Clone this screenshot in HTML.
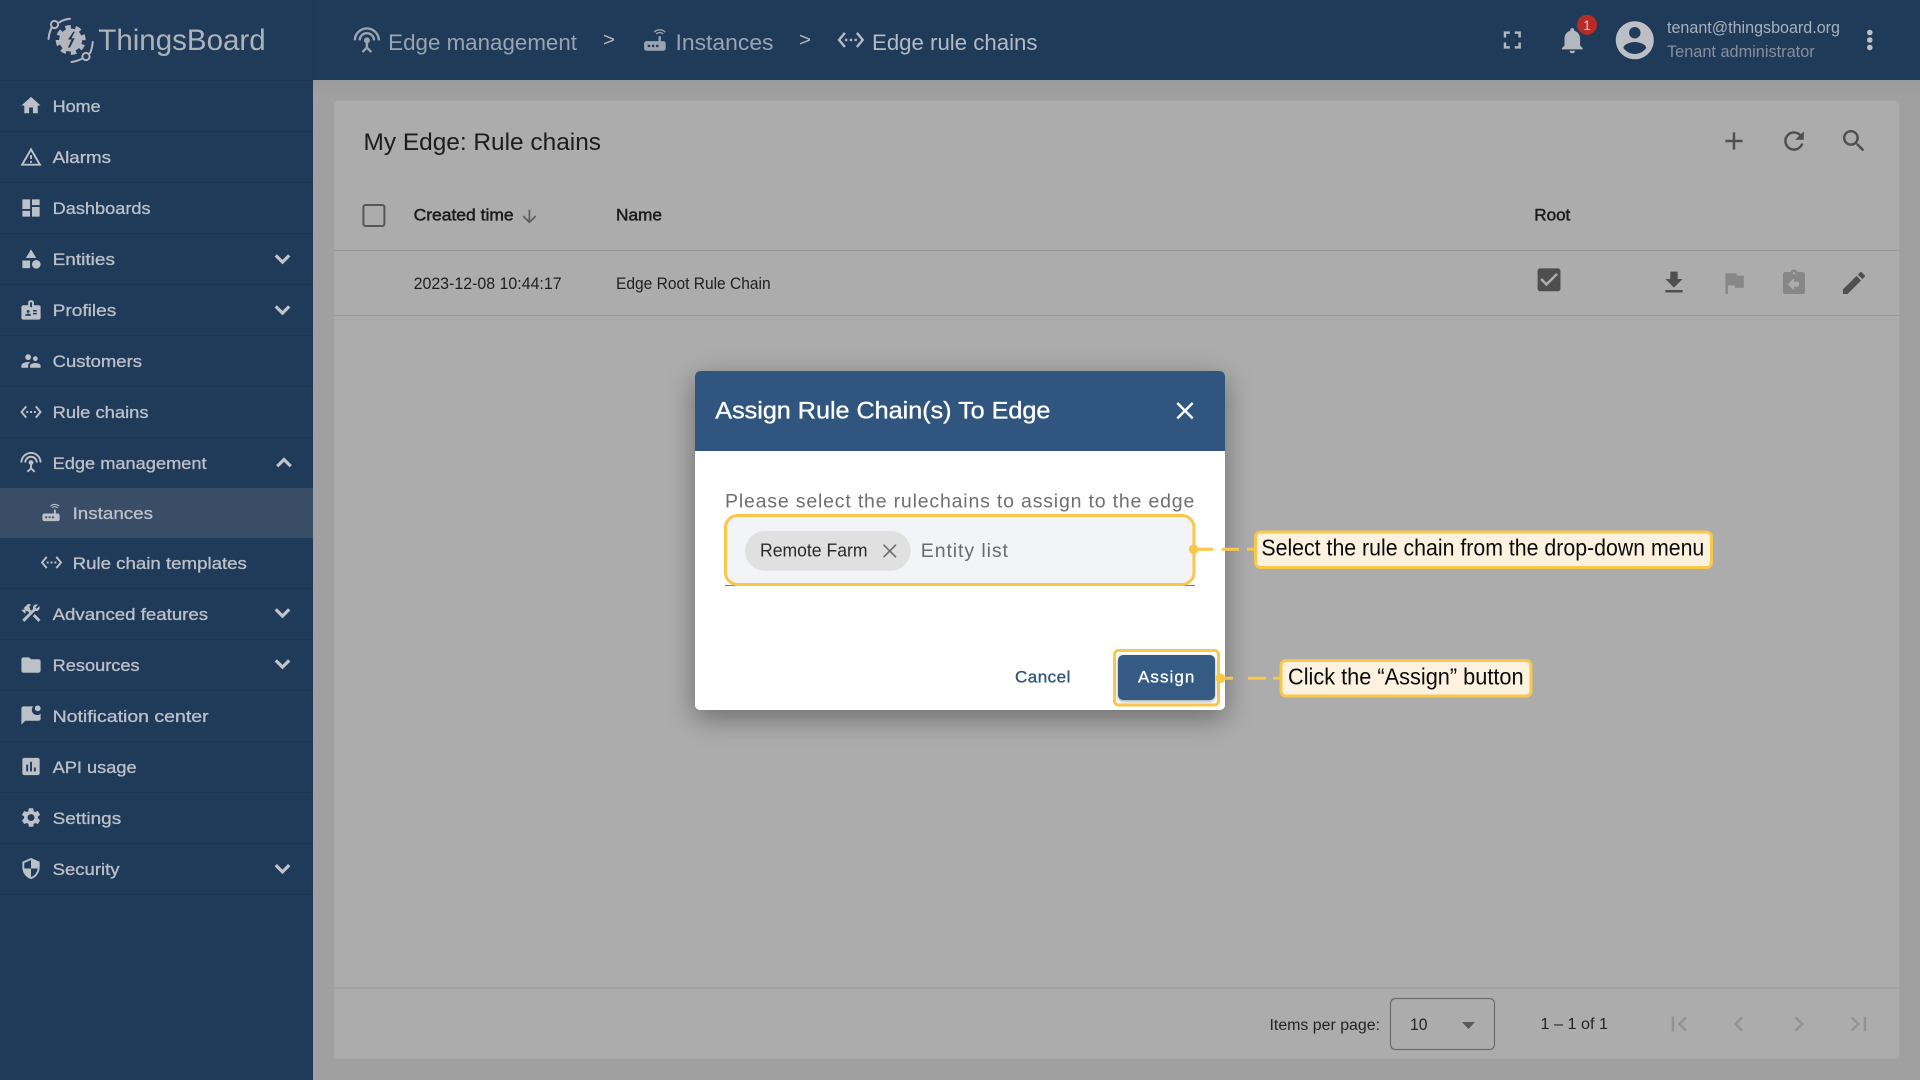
<!DOCTYPE html>
<html lang="en"><head><meta charset="utf-8"><title>ThingsBoard - Edge rule chains</title>
<style>
html,body{margin:0;padding:0;width:1920px;height:1080px;overflow:hidden;background:#a0a0a0}
svg{display:block}
text{font-family:"Liberation Sans",Arial,sans-serif;white-space:pre}
</style></head><body>
<svg xmlns="http://www.w3.org/2000/svg" width="1920" height="1080" viewBox="0 0 1920 1080">
<defs>
<filter id="ds" x="-30%" y="-30%" width="160%" height="160%"><feDropShadow dx="0" dy="8" stdDeviation="14" flood-color="#000" flood-opacity=".38"/></filter>
<filter id="bs" x="-20%" y="-20%" width="140%" height="150%"><feDropShadow dx="0" dy="1.5" stdDeviation="1.5" flood-color="#000" flood-opacity=".35"/></filter>
<linearGradient id="topg" x1="0" x2="0" y1="0" y2="1"><stop offset="0" stop-color="#9c9c9c"/><stop offset="1" stop-color="#a1a1a1"/></linearGradient>
</defs>

<!-- page -->
<rect width="1920" height="1080" fill="#a0a0a0"/>
<rect x="313" y="80" width="1607" height="21" fill="url(#topg)"/>

<!-- card -->
<rect x="334" y="100.5" width="1565.5" height="958.5" rx="4" fill="#acacac" stroke="#a3a3a3"/>
<rect x="334" y="250" width="1565.5" height="1" fill="#989898"/>
<rect x="334" y="315" width="1565.5" height="1" fill="#989898"/>
<rect x="334" y="987.5" width="1565.5" height="1" fill="#989898"/>

<text x="363.500" y="150" font-size="24.5" fill="#1c1c1c" textLength="237.500" lengthAdjust="spacingAndGlyphs">My Edge: Rule chains</text>

<!-- table head -->
<rect x="363.4" y="205" width="21" height="21" rx="2" fill="none" stroke="#565656" stroke-width="2"/>
<g fill="#1c1c1c" stroke="#1c1c1c" stroke-width=".5" font-size="17">
<text x="413.600" y="220.5" textLength="100" lengthAdjust="spacingAndGlyphs">Created time</text>
<text x="616" y="220.5" textLength="46" lengthAdjust="spacingAndGlyphs">Name</text>
<text x="1534.3" y="220.5" textLength="36" lengthAdjust="spacingAndGlyphs">Root</text>
</g>
<path transform="translate(519.2 206.5) scale(.85)" fill="#5c5c5c" d="M20 12l-1.41-1.41L13 16.17V4h-2v12.17l-5.58-5.59L4 12l8 8 8-8z"/>
<g fill="#1f1f1f" font-size="17">
<text x="413.600" y="289" textLength="148" lengthAdjust="spacingAndGlyphs">2023-12-08 10:44:17</text>
<text x="616" y="289" textLength="154.6" lengthAdjust="spacingAndGlyphs">Edge Root Rule Chain</text>
</g>
<path transform="translate(1533.8 264.6) scale(1.27)" fill="#4e4e4e" d="M19 3H5c-1.11 0-2 .9-2 2v14c0 1.1.89 2 2 2h14c1.11 0 2-.9 2-2V5c0-1.1-.89-2-2-2zm-9 14l-5-5 1.41-1.41L10 14.17l7.59-7.59L19 8l-9 9z"/>

<!-- card header icons -->
<g fill="#4f4f4f">
<path transform="translate(1719.3 126.3) scale(1.2245)" d="M19 13h-6v6h-2v-6H5v-2h6V5h2v6h6v2z"/>
<path transform="translate(1779.3 126.3) scale(1.2245)" d="M17.65 6.35C16.2 4.9 14.21 4 12 4c-4.42 0-7.99 3.58-7.99 8s3.57 8 7.99 8c3.73 0 6.84-2.55 7.73-6h-2.08c-.82 2.33-3.04 4-5.65 4-3.31 0-6-2.69-6-6s2.69-6 6-6c1.66 0 3.14.69 4.22 1.78L13 11h7V4l-2.35 2.35z"/>
<path transform="translate(1839.3 126.3) scale(1.2245)" d="M15.5 14h-.79l-.28-.27C15.41 12.59 16 11.11 16 9.5 16 5.91 13.09 3 9.5 3S3 5.91 3 9.5 5.91 16 9.5 16c1.61 0 3.09-.59 4.23-1.57l.27.28v.79l5 4.99L20.49 19l-4.99-5zm-6 0C7.01 14 5 11.99 5 9.5S7.01 5 9.5 5 14 7.01 14 9.5 11.99 14 9.5 14z"/>
<path transform="translate(1659.3 268) scale(1.2245)" d="M19 9h-4V3H9v6H5l7 7 7-7zM5 18v2h14v-2H5z"/>
<path transform="translate(1839.3 268.3) scale(1.2245)" d="M3 17.25V21h3.75L17.81 9.94l-3.75-3.75L3 17.25zM20.71 7.04c.39-.39.39-1.02 0-1.41l-2.34-2.34c-.39-.39-1.02-.39-1.41 0l-1.83 1.83 3.75 3.75 1.83-1.83z"/>
</g>
<g fill="#878787">
<path transform="translate(1719.3 268.3) scale(1.2245)" d="M14.4 6L14 4H5v17h2v-7h5.6l.4 2h7V6z"/>
<path transform="translate(1779.3 268.3) scale(1.2245)" d="M19 3h-4.18C14.4 1.84 13.3 1 12 1c-1.3 0-2.4.84-2.82 2H5c-1.1 0-2 .9-2 2v14c0 1.1.9 2 2 2h14c1.1 0 2-.9 2-2V5c0-1.1-.9-2-2-2zm-7 0c.55 0 1 .45 1 1s-.45 1-1 1-1-.45-1-1 .45-1 1-1zm4 12h-4v3l-5-5 5-5v3h4v4z"/>
</g>

<!-- footer -->
<g fill="#242424">
<text x="1269.5" y="1030" font-size="15.5" textLength="110.5" lengthAdjust="spacingAndGlyphs">Items per page:</text>
<text x="1410" y="1030" font-size="16.5" textLength="17.5" lengthAdjust="spacingAndGlyphs">10</text>
<text x="1540.5" y="1029" font-size="16" textLength="67.5" lengthAdjust="spacingAndGlyphs">1 – 1 of 1</text>
</g>
<rect x="1390.5" y="998.5" width="104" height="51" rx="5" fill="none" stroke="#6c6c6c" stroke-width="1.2"/>
<path d="M1462 1022h13l-6.500 7z" fill="#5a5a5a"/>
<g fill="#929292">
<path transform="translate(1664.3 1009.300) scale(1.2245)" d="M18.41 16.59L13.82 12l4.59-4.59L17 6l-6 6 6 6zM6 6h2v12H6z"/>
<path transform="translate(1724 1009.300) scale(1.2245)" d="M15.41 7.41L14 6l-6 6 6 6 1.41-1.41L10.830 12z"/>
<path transform="translate(1784.300 1009.300) scale(1.2245)" d="M10 6L8.590 7.410 13.170 12l-4.580 4.590L10 18l6-6z"/>
<path transform="translate(1844.100 1009.300) scale(1.2245)" d="M5.590 7.410L10.180 12l-4.590 4.590L7 18l6-6-6-6zM16 6h2v12h-2z"/>
</g>

<!-- top bar -->
<rect width="1920" height="80" fill="#203a59"/>
<!-- sidebar -->
<rect width="313" height="1080" fill="#203a59"/>
<rect x="312.500" y="0" width="1" height="80" fill="#1e3755"/>
<rect y="488" width="313" height="50" fill="#3a4d66"/>
<g fill="#1d3654">
<rect y="80" width="313" height="1"/><rect y="131" width="313" height="1"/><rect y="182" width="313" height="1"/><rect y="233" width="313" height="1"/><rect y="284" width="313" height="1"/><rect y="335" width="313" height="1"/><rect y="386" width="313" height="1"/><rect y="437" width="313" height="1"/><rect y="588" width="313" height="1"/><rect y="639" width="313" height="1"/><rect y="690" width="313" height="1"/><rect y="741" width="313" height="1"/><rect y="792" width="313" height="1"/><rect y="843" width="313" height="1"/><rect y="894" width="313" height="1"/>
</g>

<!-- logo -->
<g fill="none" stroke="#b3b7bd" stroke-width="2" stroke-linecap="round">
<path d="M48.500 39C49 34 50 31 51.500 28"/>
<path d="M59 22.500C62 20.500 66 19.200 70 18.800"/>
<circle cx="54.500" cy="24.500" r="3.600"/>
<path d="M71.500 62C75 61.500 78.500 60.500 81.500 59"/>
<path d="M90 53C91.700 49.500 92.500 45.500 92.700 42"/>
<circle cx="86" cy="56.500" r="3.600"/>
<circle cx="70.700" cy="40" r="12" stroke-width="6" stroke-dasharray="5 4.420" stroke-linecap="butt" transform="rotate(20 70.700 40)"/>
</g>
<circle cx="70.700" cy="40" r="11.500" fill="#b3b7bd"/>
<path d="M73.500 31.500l-5.500 8h3.500l-3.500 8 2 .3 4.700-9.500H71.500l3.300-6.500z" fill="#203a59"/>
<text x="98.300" y="50" font-size="30" fill="#adb3bb" textLength="167.400" lengthAdjust="spacingAndGlyphs">ThingsBoard</text>

<!-- sidebar text -->
<g fill="#bcc1c8" stroke="#bcc1c8" stroke-width=".3" font-size="17">
<text x="52.600" y="112" textLength="48" lengthAdjust="spacingAndGlyphs">Home</text>
<text x="52.600" y="163" textLength="58.400" lengthAdjust="spacingAndGlyphs">Alarms</text>
<text x="52.600" y="214" textLength="98" lengthAdjust="spacingAndGlyphs">Dashboards</text>
<text x="52.600" y="265" textLength="62.400" lengthAdjust="spacingAndGlyphs">Entities</text>
<text x="52.600" y="316" textLength="63.700" lengthAdjust="spacingAndGlyphs">Profiles</text>
<text x="52.600" y="367" textLength="89.400" lengthAdjust="spacingAndGlyphs">Customers</text>
<text x="52.600" y="418" textLength="96" lengthAdjust="spacingAndGlyphs">Rule chains</text>
<text x="52.600" y="469" textLength="154" lengthAdjust="spacingAndGlyphs">Edge management</text>
<text x="72.600" y="519" textLength="80.400" lengthAdjust="spacingAndGlyphs">Instances</text>
<text x="72.600" y="569" textLength="174.300" lengthAdjust="spacingAndGlyphs">Rule chain templates</text>
<text x="52.600" y="620" textLength="155.500" lengthAdjust="spacingAndGlyphs">Advanced features</text>
<text x="52.600" y="671" textLength="87" lengthAdjust="spacingAndGlyphs">Resources</text>
<text x="52.600" y="722" textLength="156" lengthAdjust="spacingAndGlyphs">Notification center</text>
<text x="52.600" y="773" textLength="84" lengthAdjust="spacingAndGlyphs">API usage</text>
<text x="52.600" y="824" textLength="68.600" lengthAdjust="spacingAndGlyphs">Settings</text>
<text x="52.600" y="875" textLength="67" lengthAdjust="spacingAndGlyphs">Security</text>
</g>

<!-- sidebar icons -->
<g fill="#bcc1c8">
<path transform="translate(19.500 94) scale(.96)" d="M10 20v-6h4v6h5v-8h3L12 3 2 12h3v8z"/>
<path transform="translate(19.500 145.500) scale(.96)" d="M12 5.990L19.530 19H4.470L12 5.990M12 2L1 21h22L12 2zm1 14h-2v2h2v-2zm0-6h-2v4h2v-4z"/>
<path transform="translate(19.500 196.500) scale(.96)" d="M3 13h8V3H3v10zm0 8h8v-6H3v6zm10 0h8V11h-8v10zm0-18v6h8V3h-8z"/>
<path transform="translate(19.500 247.500) scale(.96)" d="M12 2l-5.500 9h11zM3 13.500h8v8H3zM17.500 13a4.500 4.500 0 1 0 0 9 4.500 4.500 0 0 0 0-9z"/>
<path transform="translate(19.500 298.500) scale(.96)" d="M20 7h-5V4c0-1.100-.9-2-2-2h-2c-1.100 0-2 .9-2 2v3H4c-1.100 0-2 .9-2 2v11c0 1.100.9 2 2 2h16c1.100 0 2-.9 2-2V9c0-1.100-.9-2-2-2zM9 12c.83 0 1.500.67 1.500 1.500S9.830 15 9 15s-1.500-.67-1.500-1.500S8.170 12 9 12zm3 6H6v-.75c0-1 2-1.500 3-1.500s3 .5 3 1.500V18zm1-9h-2V4h2v5zm5 7.500h-4V15h4v1.500zm0-3h-4V12h4v1.500z"/>
<path transform="translate(19.500 349.500) scale(.96)" d="M16.500 12c1.380 0 2.490-1.120 2.490-2.500S17.880 7 16.500 7C15.120 7 14 8.120 14 9.500s1.120 2.500 2.500 2.500zM9 11c1.660 0 2.990-1.340 2.990-3S10.660 5 9 5C7.340 5 6 6.340 6 8s1.340 3 3 3zm7.500 3c-1.830 0-5.500.92-5.500 2.750V19h11v-2.250c0-1.830-3.670-2.750-5.500-2.750zM9 13c-2.330 0-7 1.170-7 3.500V19h7v-2.250c0-.85.33-2.340 2.370-3.470C10.500 13.100 9.660 13 9 13z"/>
<path transform="translate(19.500 400.500) scale(.96)" d="M7.770 6.760L6.230 5.480.82 12l5.410 6.520 1.540-1.280L3.420 12l4.350-5.240zM7 13h2v-2H7v2zm10-2h-2v2h2v-2zm-6 2h2v-2h-2v2zm6.770-7.520l-1.540 1.280L20.580 12l-4.350 5.240 1.540 1.280L23.180 12l-5.410-6.520z"/>
<path transform="translate(19.500 451) scale(.96)" d="M12 5c-3.870 0-7 3.130-7 7h2c0-2.760 2.240-5 5-5s5 2.240 5 5h2c0-3.870-3.130-7-7-7zm1 9.290c.88-.39 1.500-1.260 1.500-2.290 0-1.380-1.120-2.500-2.500-2.500S9.500 10.620 9.500 12c0 1.020.62 1.900 1.500 2.290v3.300L7.590 21 9 22.410l3-3 3 3L16.410 21 13 17.590v-3.300zM12 1C5.930 1 1 5.930 1 12h2c0-4.970 4.030-9 9-9s9 4.030 9 9h2c0-6.070-4.930-11-11-11z"/>
<path transform="translate(39.500 501) scale(.96)" d="M20.200 5.900l.8-.8C19.600 3.700 17.800 3 16 3s-3.600.7-5 2.100l.8.8C13 4.800 14.500 4.200 16 4.200s3 .6 4.200 1.700zm-.9.8c-.9-.9-2.100-1.400-3.300-1.400s-2.400.5-3.300 1.400l.8.8c.7-.7 1.600-1 2.500-1 .9 0 1.800.3 2.500 1l.8-.8zM19 13h-2V9h-2v4H5c-1.100 0-2 .9-2 2v4c0 1.100.9 2 2 2h14c1.100 0 2-.9 2-2v-4c0-1.100-.9-2-2-2zM8 18H6v-2h2v2zm3.500 0h-2v-2h2v2zm3.500 0h-2v-2h2v2z"/>
<path transform="translate(40 551) scale(.96)" d="M7.770 6.760L6.230 5.480.82 12l5.410 6.520 1.540-1.280L3.420 12l4.350-5.240zM7 13h2v-2H7v2zm10-2h-2v2h2v-2zm-6 2h2v-2h-2v2zm6.770-7.520l-1.540 1.280L20.580 12l-4.350 5.240 1.540 1.280L23.180 12l-5.410-6.520z"/>
<path transform="translate(19.500 601.500) scale(.96)" d="M13.783 15.172l2.121-2.121 5.996 5.996-2.121 2.121zM17.500 10c1.930 0 3.500-1.570 3.500-3.500 0-.58-.16-1.120-.41-1.600l-2.700 2.700-1.490-1.490 2.700-2.700c-.48-.25-1.020-.41-1.600-.41C15.570 3 14 4.570 14 6.500c0 .41.08.8.21 1.160l-1.850 1.850-1.780-1.780.71-.71-1.410-1.410L12 3.490c-1.170-1.170-3.070-1.170-4.240 0L4.220 7.030l1.410 1.410H2.810l-.71.71 3.540 3.540.71-.71V9.150l1.410 1.410.71-.71 1.780 1.780-7.410 7.410 2.120 2.120L16.340 9.790c.36.13.75.21 1.160.21z"/>
<path transform="translate(19.500 653.500) scale(.96)" d="M10 4H4c-1.100 0-1.990.9-1.990 2L2 18c0 1.100.9 2 2 2h16c1.100 0 2-.9 2-2V8c0-1.100-.9-2-2-2h-8l-2-2z"/>
<path transform="translate(19.500 703.500) scale(.96)" d="M14.300 3H4c-1.100 0-2 .9-2 2v17l4-4h14c1.100 0 2-.9 2-2V10.500A5 5 0 0 1 14.300 3zM19 2a3 3 0 1 0 0 6 3 3 0 0 0 0-6z"/>
<path transform="translate(19.500 755) scale(.96)" d="M19 3H5c-1.100 0-2 .9-2 2v14c0 1.100.9 2 2 2h14c1.100 0 2-.9 2-2V5c0-1.100-.9-2-2-2zM9 17H7v-7h2v7zm4 0h-2V7h2v10zm4 0h-2v-4h2v4z"/>
<path transform="translate(19.500 806) scale(.96)" d="M19.140 12.940c.04-.3.06-.61.06-.94 0-.32-.02-.64-.07-.94l2.030-1.580c.18-.14.23-.41.12-.61l-1.920-3.320c-.12-.22-.37-.29-.59-.22l-2.390.96c-.5-.38-1.030-.7-1.620-.94l-.36-2.540c-.04-.24-.24-.41-.48-.41h-3.840c-.24 0-.43.17-.47.41l-.36 2.540c-.59.24-1.130.57-1.620.94l-2.390-.96c-.22-.08-.47 0-.59.22L2.740 8.870c-.12.21-.08.47.12.61l2.030 1.580c-.05.3-.09.63-.09.94s.02.64.07.94l-2.030 1.580c-.18.14-.23.41-.12.61l1.920 3.320c.12.22.37.29.59.22l2.390-.96c.5.38 1.030.7 1.620.94l.36 2.540c.05.24.24.41.48.41h3.840c.24 0 .44-.17.47-.41l.36-2.540c.59-.24 1.130-.56 1.620-.94l2.390.96c.22.08.47 0 .59-.22l1.920-3.320c.12-.22.07-.47-.12-.61l-2.010-1.580zM12 15.600c-1.980 0-3.600-1.620-3.600-3.600s1.620-3.600 3.600-3.600 3.600 1.620 3.600 3.600-1.620 3.600-3.600 3.600z"/>
<path transform="translate(19.500 857) scale(.96)" d="M12 1L3 5v6c0 5.550 3.840 10.740 9 12 5.160-1.260 9-6.450 9-12V5l-9-4zm0 10.990h7c-.53 4.120-3.280 7.790-7 8.940V12H5V6.300l7-3.110v8.800z"/>
</g>
<!-- chevrons -->
<g fill="#c0c5cb" stroke="#c0c5cb" stroke-width=".6">
<path transform="translate(267.800 244.300) scale(1.2245)" d="M16.590 8.590L12 13.170 7.410 8.590 6 10l6 6 6-6z"/>
<path transform="translate(267.800 295.300) scale(1.2245)" d="M16.590 8.590L12 13.170 7.410 8.590 6 10l6 6 6-6z"/>
<path transform="translate(269.300 448) scale(1.2245)" d="M12 8l-6 6 1.410 1.410L12 10.830l4.590 4.580L18 14z"/>
<path transform="translate(267.800 598.300) scale(1.2245)" d="M16.590 8.590L12 13.170 7.410 8.590 6 10l6 6 6-6z"/>
<path transform="translate(267.800 649.300) scale(1.2245)" d="M16.590 8.590L12 13.170 7.410 8.590 6 10l6 6 6-6z"/>
<path transform="translate(267.800 854) scale(1.2245)" d="M16.590 8.590L12 13.170 7.410 8.590 6 10l6 6 6-6z"/>
</g>

<!-- breadcrumb -->
<g font-size="22">
<text x="388.200" y="50" fill="#9aa4b0" textLength="188.800" lengthAdjust="spacingAndGlyphs">Edge management</text>
<text x="675.500" y="50" fill="#9aa4b0" textLength="98" lengthAdjust="spacingAndGlyphs">Instances</text>
<text x="872" y="50" fill="#b4bac2" textLength="165.500" lengthAdjust="spacingAndGlyphs">Edge rule chains</text>
<text x="603" y="46" fill="#b4bac2" font-size="19" textLength="12" lengthAdjust="spacingAndGlyphs">&gt;</text>
<text x="799" y="46" fill="#b4bac2" font-size="19" textLength="12" lengthAdjust="spacingAndGlyphs">&gt;</text>
</g>
<path fill="#9aa4b0" transform="translate(352.500 26) scale(1.2)" d="M12 5c-3.870 0-7 3.130-7 7h2c0-2.760 2.240-5 5-5s5 2.240 5 5h2c0-3.870-3.130-7-7-7zm1 9.290c.88-.39 1.500-1.260 1.500-2.290 0-1.380-1.120-2.500-2.500-2.500S9.500 10.620 9.500 12c0 1.020.62 1.900 1.500 2.290v3.300L7.590 21 9 22.410l3-3 3 3L16.410 21 13 17.590v-3.300zM12 1C5.930 1 1 5.930 1 12h2c0-4.970 4.030-9 9-9s9 4.030 9 9h2c0-6.070-4.930-11-11-11z"/>
<path fill="#9aa4b0" transform="translate(640.500 25.500) scale(1.2)" d="M20.200 5.900l.8-.8C19.600 3.700 17.800 3 16 3s-3.600.7-5 2.100l.8.8C13 4.800 14.500 4.200 16 4.200s3 .6 4.200 1.700zm-.9.8c-.9-.9-2.100-1.400-3.300-1.400s-2.400.5-3.300 1.400l.8.8c.7-.7 1.600-1 2.500-1 .9 0 1.800.3 2.500 1l.8-.8zM19 13h-2V9h-2v4H5c-1.100 0-2 .9-2 2v4c0 1.100.9 2 2 2h14c1.100 0 2-.9 2-2v-4c0-1.100-.9-2-2-2zM8 18H6v-2h2v2zm3.500 0h-2v-2h2v2zm3.500 0h-2v-2h2v2z"/>
<path fill="#b4bac2" transform="translate(836.500 25.500) scale(1.2)" d="M7.770 6.760L6.230 5.480.82 12l5.410 6.520 1.540-1.280L3.420 12l4.350-5.240zM7 13h2v-2H7v2zm10-2h-2v2h2v-2zm-6 2h2v-2h-2v2zm6.770-7.520l-1.540 1.280L20.580 12l-4.350 5.240 1.540 1.280L23.180 12l-5.410-6.520z"/>

<!-- top right -->
<path fill="#b3b8bf" transform="translate(1497.600 25.300) scale(1.2245)" d="M7 14H5v5h5v-2H7v-3zm-2-4h2V7h3V5H5v5zm12 7h-3v2h5v-5h-2v3zM14 5v2h3v3h2V5h-5z"/>
<path fill="#b3b8bf" transform="translate(1556.700 24.700) scale(1.3)" d="M12 22c1.100 0 2-.9 2-2h-4c0 1.100.89 2 2 2zm6-6v-5c0-3.070-1.640-5.640-4.500-6.320V4c0-.83-.67-1.500-1.500-1.500s-1.500.67-1.500 1.500v.68C7.630 5.360 6 7.920 6 11v5l-2 2v1h16v-1l-2-2z"/>
<circle cx="1587" cy="24.700" r="10" fill="#b92b27"/>
<text x="1583.500" y="30" font-size="13.500" fill="#e8d4d2" textLength="7" lengthAdjust="spacingAndGlyphs">1</text>
<path fill="#bcc0c6" transform="translate(1612 17.500) scale(1.9)" d="M12 2C6.480 2 2 6.480 2 12s4.480 10 10 10 10-4.480 10-10S17.520 2 12 2zm0 3c1.660 0 3 1.340 3 3s-1.340 3-3 3-3-1.340-3-3 1.340-3 3-3zm0 14.200c-2.500 0-4.710-1.280-6-3.220.03-1.990 4-3.080 6-3.080 1.990 0 5.970 1.090 6 3.080-1.290 1.940-3.500 3.220-6 3.220z"/>
<text x="1667" y="33" font-size="17" fill="#a8b0ba" textLength="173" lengthAdjust="spacingAndGlyphs">tenant@thingsboard.org</text>
<text x="1667" y="57" font-size="17" fill="#8590a0" textLength="147.700" lengthAdjust="spacingAndGlyphs">Tenant administrator</text>
<g fill="#bcc0c6"><circle cx="1869.800" cy="32.500" r="2.800"/><circle cx="1869.800" cy="40" r="2.800"/><circle cx="1869.800" cy="47.500" r="2.800"/></g>

<!-- dialog -->
<rect x="695" y="371" width="530" height="339" rx="5" fill="#fff" filter="url(#ds)"/>
<path d="M695 451V376a5 5 0 0 1 5-5h520a5 5 0 0 1 5 5v75z" fill="#305680"/>
<text x="715.300" y="418.700" font-size="24.500" fill="#fff" stroke="#fff" stroke-width=".35" textLength="335.100" lengthAdjust="spacingAndGlyphs">Assign Rule Chain(s) To Edge</text>
<path fill="#fff" transform="translate(1170.300 396) scale(1.2245)" d="M19 6.410L17.590 5 12 10.590 6.410 5 5 6.410 10.590 12 5 17.590 6.410 19 12 13.410 17.590 19 19 17.590 13.410 12z"/>
<text x="725" y="507.700" font-size="19.500" fill="#6f6f6f" textLength="469.300" lengthAdjust="spacing">Please select the rulechains to assign to the edge</text>

<!-- field -->
<rect x="725" y="585" width="470" height="1" fill="#7a7a7a"/>
<rect x="725.500" y="515.500" width="468.500" height="69" rx="12" fill="#f2f4f8" stroke="#f8c74b" stroke-width="3"/>
<rect x="745" y="531" width="165.700" height="39.700" rx="19.800" fill="#e0e0e0"/>
<text x="760" y="556.700" font-size="18" fill="#2a2a2a" textLength="107.500" lengthAdjust="spacingAndGlyphs">Remote Farm</text>
<path d="M883.500 544.700l12.500 12.500M896 544.700l-12.500 12.500" stroke="#6d6d6d" stroke-width="1.600" fill="none"/>
<text x="920.800" y="557.200" font-size="19.500" fill="#6a6a6a" textLength="87.100" lengthAdjust="spacing">Entity list</text>

<!-- actions -->
<text x="1015" y="682.700" font-size="17" fill="#305680" stroke="#305680" stroke-width=".35" textLength="55.400" lengthAdjust="spacing">Cancel</text>
<rect x="1114.500" y="650.500" width="104" height="54.500" rx="4" fill="none" stroke="#f8c74b" stroke-width="3"/>
<rect x="1118" y="655" width="97" height="45" rx="5" fill="#345a84" filter="url(#bs)"/>
<text x="1138" y="682.700" font-size="17" fill="#fff" stroke="#fff" stroke-width=".3" textLength="56.300" lengthAdjust="spacing">Assign</text>

<!-- callouts -->
<circle cx="1193.600" cy="549.300" r="4.800" fill="#f8c74b"/>
<path d="M1193 549.300h20M1222 549.300h17M1247 549.300h8" stroke="#f8c74b" stroke-width="3" fill="none"/>
<rect x="1255.500" y="532" width="456" height="35.500" rx="5" fill="#fdf1e0" stroke="#f8c74b" stroke-width="3"/>
<text x="1261.400" y="555.500" font-size="23" fill="#0c0c0c" textLength="442.900" lengthAdjust="spacingAndGlyphs">Select the rule chain from the drop-down menu</text>
<circle cx="1220.400" cy="678.300" r="4.800" fill="#f8c74b"/>
<path d="M1220 678.300h13M1248 678.300h18M1273 678.300h8" stroke="#f8c74b" stroke-width="3" fill="none"/>
<rect x="1281" y="660.500" width="250" height="35.500" rx="5" fill="#fdf1e0" stroke="#f8c74b" stroke-width="3"/>
<text x="1288" y="684.500" font-size="23" fill="#0c0c0c" textLength="235.600" lengthAdjust="spacingAndGlyphs">Click the “Assign” button</text>
</svg>
</body></html>
